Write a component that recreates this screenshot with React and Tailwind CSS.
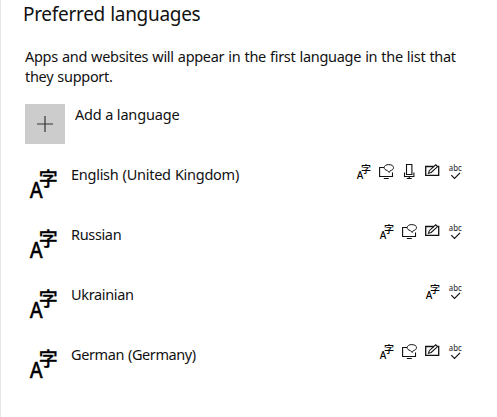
const LANGUAGES = [
  { name: "English (United Kingdom)", tracking: "tracking-[-0.26px]", features: ["display", "speech", "voice", "pen", "spelling"] },
  { name: "Russian", tracking: "tracking-[-0.35px]", features: ["display", "speech", "pen", "spelling"] },
  { name: "Ukrainian", tracking: "tracking-[-0.35px]", features: ["display", "spelling"] },
  { name: "German (Germany)", tracking: "tracking-[-0.4px]", features: ["display", "speech", "pen", "spelling"] },
];

function LanguageIcon() {
  return (
    <svg width="30" height="32" viewBox="0 0 30 32" className="shrink-0 overflow-visible">
      <text x="0.8" y="30" fontSize="22" fontWeight="500" stroke="#000" strokeWidth="0.3" textLength="13" lengthAdjust="spacingAndGlyphs" className="font-['Noto_Sans',sans-serif]">A</text>
      <text x="9.8" y="18.2" fontSize="19" fontWeight="500" stroke="#000" strokeWidth="0.3" className="font-['Noto_Sans_CJK_JP',sans-serif]">字</text>
    </svg>
  );
}

function DisplayIcon() {
  return (
    <svg width="15" height="18" viewBox="0 0 15 18" className="overflow-visible">
      <text x="0.8" y="14.5" fontSize="11" fontWeight="500" textLength="6.6" lengthAdjust="spacingAndGlyphs" className="font-['Noto_Sans',sans-serif]">A</text>
      <text x="5" y="9.3" fontSize="10" fontWeight="500" className="font-['Noto_Sans_CJK_JP',sans-serif]">字</text>
    </svg>
  );
}

function SpeechIcon() {
  return (
    <svg width="15" height="18" viewBox="0 0 15 18" fill="none" stroke="#111" strokeWidth="1.1">
      <path d="M5 3.5H.6v9h12.9V8.5M4.8 14.5h5" />
      <path d="M9.8.6c2.8 0 4.7 1.2 4.7 3s-1.7 2.8-3.1 2.9l-1.2 2-1.9-2C6.4 6.1 5.2 5.1 5.2 3.6c0-1.8 1.8-3 4.6-3Z" strokeWidth="1" />
    </svg>
  );
}

function VoiceIcon() {
  return (
    <svg width="15" height="18" viewBox="0 0 15 18" fill="none" stroke="#111">
      <path d="M4.5.5h5.4v10H4.5z" strokeWidth="1.1" />
      <path d="M2.5 8.5v4h9.4v-4M7.2 12.5v2M4.7 14.5h5" strokeWidth="1.1" />
    </svg>
  );
}

function PenIcon() {
  return (
    <svg width="15" height="18" viewBox="0 0 15 18" fill="none" stroke="#111">
      <path d="M8.6 2.5H.7v8.8h13V2.5h-1" strokeWidth="1.3" />
      <path d="m3.5 9.3.8-2.6L10.7.8l1.9 1.8-6.4 5.9z" strokeWidth="1.1" />
    </svg>
  );
}

function SpellingIcon() {
  return (
    <svg width="15" height="18" viewBox="0 0 15 18" className="overflow-visible">
      <text x="0.8" y="6.8" fontSize="9" fill="#222" textLength="13" lengthAdjust="spacingAndGlyphs" className="font-['Noto_Sans',sans-serif]">abc</text>
      <path d="m3.3 11.2 3.2 3.2 5.5-5.5" fill="none" stroke="#111" strokeWidth="1.2" />
    </svg>
  );
}

const FEATURE_ICONS = {
  display: DisplayIcon,
  speech: SpeechIcon,
  voice: VoiceIcon,
  pen: PenIcon,
  spelling: SpellingIcon,
};

function LanguageRow({ language }) {
  return (
    <li className="flex h-[60px] items-start">
      <div className="w-[42px] shrink-0 pt-1">
        <LanguageIcon />
      </div>
      <span className={`whitespace-nowrap ${language.tracking}`}>{language.name}</span>
      <div className="ml-auto flex gap-2">
        {language.features.map((feature) => {
          const Icon = FEATURE_ICONS[feature];
          return <Icon key={feature} />;
        })}
      </div>
    </li>
  );
}

export default function App() {
  return (
    <main className="h-[417px] w-[497px] overflow-hidden border-l border-[#e6e6e6] bg-white font-['Noto_Sans',sans-serif] text-[14.5px] leading-5 text-[#111] [word-spacing:0.6px]">
      <h1 className="pl-[22px] text-[19px] leading-7 tracking-[-0.3px]">Preferred languages</h1>
      <p className="mt-[18px] pl-6 tracking-[-0.3px] whitespace-nowrap">
        Apps and websites will appear in the first language in the list that
        <br />
        they support.
      </p>
      <button type="button" className="mt-[18px] ml-6 flex items-start gap-2.5">
        <span className="flex size-10 items-center justify-center bg-[#ccc]">
          <svg width="16" height="16" viewBox="0 0 16 16" stroke="#333" strokeWidth="1.2">
            <path d="M8 0v16M0 8h16" />
          </svg>
        </span>
        <span className="tracking-[-0.16px]">Add a language</span>
      </button>
      <ul className="mt-5 pr-[34px] pl-7">
        {LANGUAGES.map((language) => (
          <LanguageRow key={language.name} language={language} />
        ))}
      </ul>
    </main>
  );
}
